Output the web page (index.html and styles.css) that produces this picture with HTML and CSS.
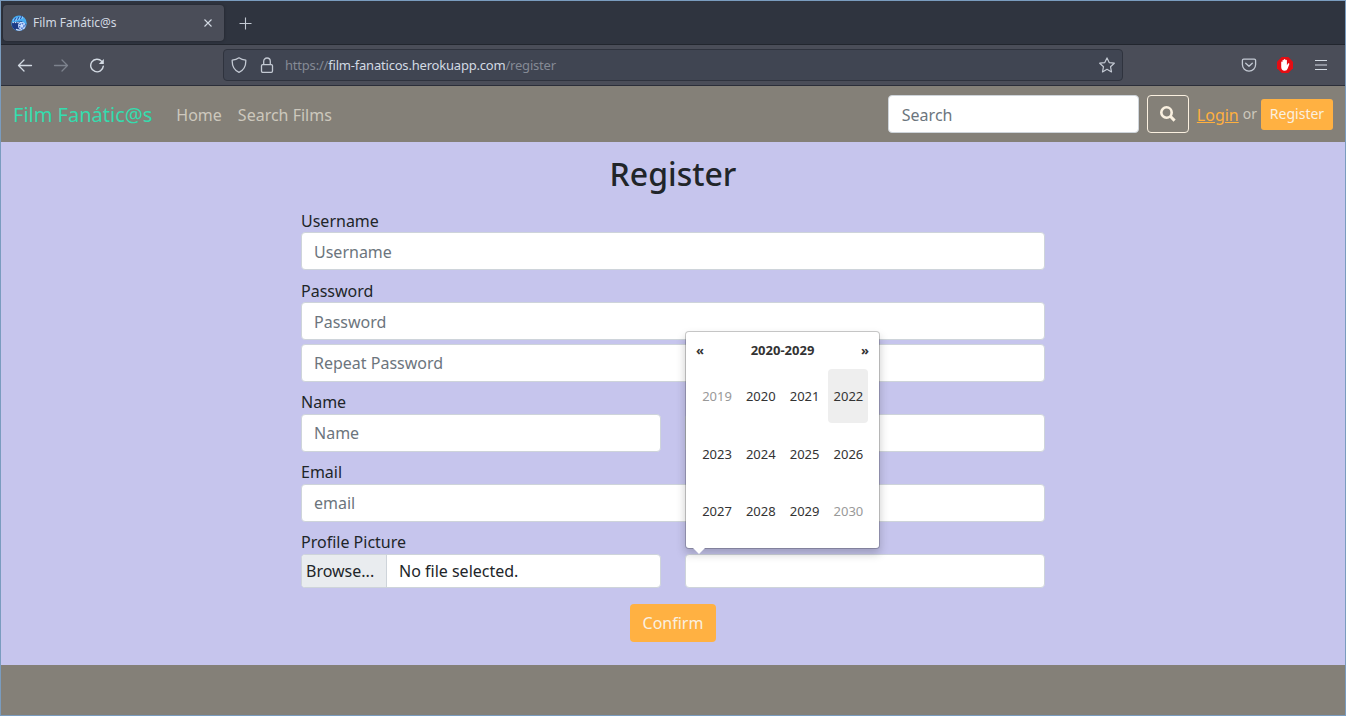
FILE: index.html
```html
<!DOCTYPE html>
<html lang="en">
<head>
<meta charset="utf-8">
<title>Film Fanátic@s</title>
<link rel="stylesheet" href="styles.css">
</head>
<body>
<div class="window">
  <div class="tabs">
    <div class="tab">
      <svg class="favicon" width="16" height="16" viewBox="0 0 16 16">
        <circle cx="8" cy="8.2" r="7.7" fill="#46aaf0"/>
        <path d="M.6 7.5 L11 6.2 L12 8 L15 9 Q14.500 13.500 10.500 15.400 Q4 16.500 1.300 12Z" fill="#1c3a86"/>
        <path d="M2 4.200 L11.500 1 L12.300 3.300 L2.600 6.200Z" fill="#8fd0ff"/>
        <path d="M3 5.800 L5 3 M6.300 4.800 L8 2 M9.300 4 L11 1" stroke="#2450a8" stroke-width="1.1"/>
        <path d="M1.500 7.600h9.500" stroke="#e6f4ff" stroke-width="1" stroke-dasharray="1.400 1"/>
        <circle cx="10.800" cy="10.800" r="3.700" fill="#c8deff"/>
        <circle cx="10.800" cy="10.800" r="2.300" fill="none" stroke="#3666c7" stroke-width="1.200" stroke-dasharray="1.600 .8"/>
        <path d="M5 14.300 Q8 16 11 14.500" stroke="#d4e6ff" stroke-width="1.200" fill="none"/>
      </svg>
      <span class="tab-title">Film Fanátic@s</span>
      <svg class="tab-close" width="8" height="8" viewBox="0 0 8 8"><path d="M.5.5l7 7M7.5.5l-7 7" stroke="#d3dae3" stroke-width="1.1"/></svg>
    </div>
    <svg class="new-tab" width="13" height="13" viewBox="0 0 13 13"><path d="M6.5.5v12M.5 6.5h12" stroke="#c3c9d3" stroke-width="1.1"/></svg>
  </div>
  <div class="toolbar">
    <div class="nav-icons">
      <svg width="16" height="16" viewBox="0 0 16 16" fill="none" stroke="#d3dae3" stroke-width="1.3" stroke-linecap="round" stroke-linejoin="round"><path d="M7 3L1.500 8.500L7 14M1.500 8.500h13"/></svg>
      <svg width="16" height="16" viewBox="0 0 16 16" fill="none" stroke="#7d828d" stroke-width="1.3" stroke-linecap="round" stroke-linejoin="round"><path d="M9 3L14.500 8.500L9 14M14.500 8.500h-13"/></svg>
      <svg width="16" height="16" viewBox="0 0 16 16"><path d="M12.800 4.400A6.300 6.300 0 1 0 14.300 9.100" fill="none" stroke="#d3dae3" stroke-width="1.400" stroke-linecap="round"/><path d="M14.800 2v5h-5z" fill="#d3dae3"/></svg>
    </div>
    <div class="urlbar">
      <svg width="16" height="16" viewBox="0 0 16 16" fill="none" stroke="#c3c9d3" stroke-width="1.300" stroke-linejoin="round"><path d="M8 .800C6 2.200 3.700 2.900 1.200 3.200C1 8.500 3 13.200 8 15.300C13 13.200 15 8.500 14.800 3.200C12.300 2.900 10 2.200 8 .800Z"/></svg>
      <svg class="lock" width="14" height="16" viewBox="0 0 14 16" fill="none" stroke="#c3c9d3" stroke-width="1.300"><rect x="1.500" y="7.600" width="11" height="7.700" rx="1.200"/><path d="M3.700 7.600V4.300a3.300 3.300 0 0 1 6.600 0V7.600"/></svg>
      <span class="url">https://<b>film-fanaticos.herokuapp.com</b>/register</span>
      <svg class="star" width="16" height="16" viewBox="0 0 16 16" fill="none" stroke="#c3c9d3" stroke-width="1.200" stroke-linejoin="round"><path d="M8 .900L10.200 5.600L15.300 6.200L11.500 9.700L12.500 14.900L8 12.300L3.500 14.900L4.500 9.700L.700 6.200L5.800 5.600Z"/></svg>
    </div>
    <div class="tools">
      <svg width="16" height="16" viewBox="0 0 16 16" fill="none" stroke="#c3c9d3" stroke-width="1.300" stroke-linecap="round" stroke-linejoin="round"><path d="M2.700 2.200h10.600a1.300 1.300 0 0 1 1.300 1.300V7.500a6.600 6.600 0 0 1-13.200 0V3.500A1.300 1.300 0 0 1 2.700 2.200ZM4.700 6.200L8 9.300L11.300 6.200"/></svg>
      <svg width="16" height="16" viewBox="0 0 16 16"><path d="M4.700 0h6.600L16 4.700v6.600L11.300 16H4.700L0 11.300V4.700Z" fill="#e40d13"/><path d="M4.200 5.200c0-1 1.300-1 1.300 0V3.600c0-1 1.400-1 1.400 0V2.800c0-1 1.500-1 1.500 0v.8c0-1 1.500-1 1.500 0v4.600l1.100-1.600c.6-.6 1.600-.1 1.300.6L10.700 11.500Q10 13.700 7.700 13.700Q4.200 13.700 4.200 10Z" fill="#fff"/></svg>
      <svg width="16" height="16" viewBox="0 0 16 16"><path d="M2 3.500h12M2 8h12M2 12.500h12" stroke="#d3dae3" stroke-width="1.200"/></svg>
    </div>
  </div>
  <nav class="navbar">
    <span class="brand">Film Fanátic@s</span>
    <span class="nav-link">Home</span>
    <span class="nav-link">Search Films</span>
    <input class="control search" placeholder="Search">
    <div class="search-button"><svg width="16" height="16" viewBox="0 0 16 16"><circle cx="6.500" cy="6.500" r="5.200" fill="none" stroke="#faf0e0" stroke-width="2.600"/><path d="M10.300 10.300L14.600 14.600" stroke="#faf0e0" stroke-width="3"/></svg></div>
    <a class="login">Login</a>
    <span class="or">or</span>
    <div class="button small">Register</div>
  </nav>
  <main class="page">
    <h1 class="heading">Register</h1>
    <form class="form">
      <div class="field lowered"><label class="label">Username</label><input class="control" placeholder="Username"></div>
      <div class="field lowered"><label class="label">Password</label><input class="control" placeholder="Password"><input class="control repeat" placeholder="Repeat Password"></div>
      <div class="row">
        <div class="field"><label class="label">Name</label><input class="control" placeholder="Name"></div>
        <div class="field end"><input class="control"></div>
      </div>
      <div class="field"><label class="label">Email</label><input class="control" placeholder="email"></div>
      <div class="row">
        <div class="field"><label class="label">Profile Picture</label><div class="control file"><span class="browse">Browse...</span><span class="filename">No file selected.</span></div></div>
        <div class="field end">
          <input class="control year">
          <div class="picker">
            <div class="picker-head"><span>«</span><span>2020-2029</span><span>»</span></div>
            <div class="years">
              <span class="cell muted">2019</span><span class="cell">2020</span><span class="cell">2021</span><span class="cell focused">2022</span>
              <span class="cell">2023</span><span class="cell">2024</span><span class="cell">2025</span><span class="cell">2026</span>
              <span class="cell">2027</span><span class="cell">2028</span><span class="cell">2029</span><span class="cell muted">2030</span>
            </div>
          </div>
        </div>
      </div>
      <div class="button confirm">Confirm</div>
    </form>
  </main>
  <footer class="footer"></footer>
</div>
</body>
</html>
```

FILE: styles.css
```css
* { box-sizing: border-box; }
body { margin: 0; font: 16px/24px "Noto Sans", sans-serif; color: #212529; }
svg { display: block; flex: none; }
.window { width: 1346px; height: 716px; border: 1px solid #7a9cbf; display: flex; flex-direction: column; overflow: hidden; }

.tabs { height: 44px; flex: none; background: #2f343f; border-bottom: 1px solid #22262e; display: flex; align-items: center; padding-left: 2px; }
.tab { width: 221px; height: 36px; border-radius: 4px; background: #4a4d58; box-shadow: 0 0 3px rgba(0,0,0,.35); display: flex; align-items: center; padding: 0 12px 0 8px; }
.tab-title { font-size: 12px; color: #d3dae3; margin-left: 6px; padding-top: 1px; flex: 1; }
.new-tab { margin: 1px 0 0 15px; }

.toolbar { height: 41px; flex: none; background: #4a4d58; border-bottom: 1px solid #2b2e39; display: flex; align-items: center; padding: 0 16px; }
.nav-icons { display: flex; gap: 20px; width: 206px; }
.urlbar { width: 900px; height: 32px; border: 1px solid #2f333e; border-radius: 4px; background: #404552; display: flex; align-items: center; padding: 0 7px; }
.lock { margin-left: 13px; }
.url { font-size: 13px; letter-spacing: -.2px; color: #858a95; margin-left: 11px; flex: 1; }
.url b { font-weight: 400; color: #d3dae3; }
.tools { display: flex; gap: 20px; margin-left: auto; }

.navbar { height: 56px; flex: none; background: #848078; display: flex; align-items: center; padding: 0 12px; color: #cdc8bd; }
.brand { font-size: 20px; color: #35dcae; margin-right: 24px; padding-top: 2px; }
.nav-link { margin-right: 16px; padding-top: 2px; }
.control { display: block; width: 100%; height: 38px; border: 1px solid #ced4da; border-radius: 4px; background: #fff; padding: 0 12px; font: 16px/24px "Noto Sans", sans-serif; color: #212529; outline: 0; }
.control::placeholder { color: #6c757d; opacity: 1; }
.search { width: 251px; margin-left: auto; padding: 2px 12px 0 13px; }
.search-button { width: 42px; height: 38px; border: 1px solid #faf0e0; border-radius: 4px; margin: 0 8px; display: flex; align-items: center; justify-content: center; }
.login { color: #ffb03f; text-decoration: underline; padding-top: 2px; }
.or { font-size: 14px; margin: 0 4px; }
.button { background: #ffb142; border-radius: 4px; color: #faf0e0; display: flex; align-items: center; justify-content: center; }
.small { width: 72px; height: 31px; font-size: 14px; border-radius: 3px; }

.page { height: 523px; flex: none; background: #c6c5ed; padding-top: 13px; }
.heading { margin: 0; font-size: 32px; line-height: 38px; font-weight: 500; text-align: center; }
.form { width: 744px; margin: 15px auto 0; display: flex; flex-direction: column; gap: 8px; }
.field { display: flex; flex-direction: column; }
.label { height: 24px; line-height: 24px; }
.lowered .label { line-height: 26px; }
.lowered .control { padding-top: 2px; }
.lowered .repeat { margin-top: 4px; padding-top: 0; }
.row { display: grid; grid-template-columns: 1fr 1fr; gap: 24px; }
.end { justify-content: flex-end; position: relative; }
.file { height: 34px; padding: 0; display: flex; overflow: hidden; }
.browse { width: 85px; background: #e9ecef; border-right: 1px solid #ced4da; padding: 4px 0 0 4px; }
.filename { padding: 4px 0 0 12px; }
.year { height: 34px; }
.confirm { width: 86px; height: 38px; align-self: center; margin-top: 8px; }

.picker { position: absolute; left: 0; bottom: 39px; width: 195px; height: 218px; background: #fff; border: 1px solid rgba(0,0,0,.2); background-clip: padding-box; border-radius: 4px; box-shadow: 0 5px 10px rgba(0,0,0,.2); padding: 3px 10px; font-size: 13px; color: #333; }
.picker::after { content: ""; position: absolute; left: 7px; bottom: -6px; border: 6px solid transparent; border-bottom: 0; border-top-color: #fff; }
.picker-head { height: 30px; display: flex; justify-content: space-between; align-items: center; font-weight: 700; }
.years { display: grid; grid-template-columns: repeat(4, 40px); grid-auto-rows: 54px; gap: 3.5px 3.8px; margin: 4px 0 0 1px; }
.cell { display: flex; align-items: center; justify-content: center; border-radius: 4px; }
.muted { color: #999; }
.focused { background: #eee; }
.footer { flex: 1; background: #848078; }
```
